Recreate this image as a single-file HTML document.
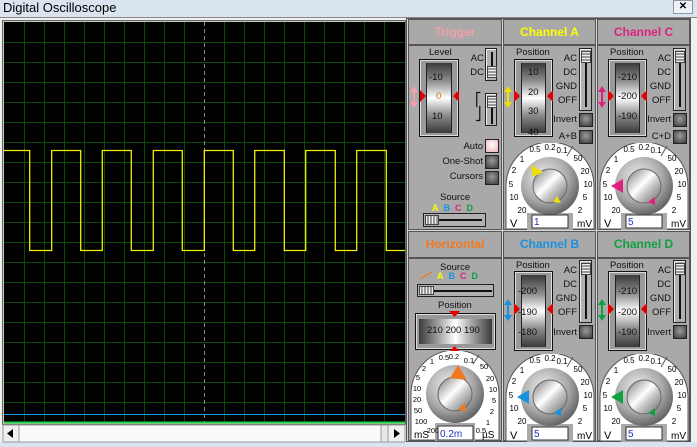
<!DOCTYPE html>
<html><head><meta charset="utf-8">
<style>
*{margin:0;padding:0;box-sizing:border-box}
body{width:697px;height:447px;overflow:hidden;background:#dae4ee;font-family:"Liberation Sans",sans-serif;position:relative}
.a{position:absolute}
.t{position:absolute;font-size:9.5px;color:#111;white-space:nowrap;line-height:1}
.hdr{position:absolute;background:#a9a9a9;border:1px solid #555;font-weight:bold;font-size:12px;text-align:center;line-height:24px}
.body{position:absolute;background:#a9a9a9;border:1px solid #555}
.btn{position:absolute;width:14px;height:14px;border:1px solid #222;background:radial-gradient(circle at 50% 40%,#9a9a9a,#3a3a3a)}
.drumbox{position:absolute;border:1px solid #111;background:#999;box-shadow:inset 0 0 0 1px #ddd}
.drum{position:absolute;left:6px;right:6px;top:3px;bottom:3px;background:linear-gradient(#3a3a3a,#8a8a8a 25%,#fff 50%,#8a8a8a 75%,#3a3a3a);border-left:1px solid #222;border-right:1px solid #222}
.vsw{position:absolute;border:1px solid #222;background:#b0b0b0;box-shadow:inset 1px 1px 0 #eee}
.vsw i{position:absolute;left:5px;width:2px;background:#111}
.vsw b{position:absolute;left:1px;width:10px;height:12px;background:repeating-linear-gradient(#eee 0 1px,#999 1px 3px);border:1px solid #444}
.r{text-align:right}
</style></head><body>
<div class="t" style="left:3px;top:1px;font-size:13px;color:#000">Digital Oscilloscope</div>
<div class="a" style="left:673px;top:0;width:20px;height:14px;border:1px solid #8a96a4;background:#eef2f6;font-size:10px;text-align:center;line-height:12px;font-weight:bold">✕</div>
<div class="a" style="left:0;top:17px;width:697px;height:425px;background:#f0f0f0;border-top:1px solid #888"></div>
<div class="a" style="left:2px;top:20px;width:404px;height:405px;background:#c8c8c8;border:1px solid #666"></div>
<svg class="a" style="left:0;top:0" width="410" height="447">
<rect x="4" y="22" width="401" height="401" fill="#000"/>
<g stroke="#0b4a0b" stroke-width="1">
<path d="M24.5 22V423M44.5 22V423M64.5 22V423M84.5 22V423M104.5 22V423M124.5 22V423M144.5 22V423M164.5 22V423M184.5 22V423M224.5 22V423M244.5 22V423M264.5 22V423M284.5 22V423M304.5 22V423M324.5 22V423M344.5 22V423M364.5 22V423M384.5 22V423"/>
<path d="M4 42.5H405M4 62.5H405M4 82.5H405M4 102.5H405M4 122.5H405M4 142.5H405M4 162.5H405M4 182.5H405M4 202.5H405M4 222.5H405M4 242.5H405M4 262.5H405M4 282.5H405M4 302.5H405M4 322.5H405M4 342.5H405M4 362.5H405M4 382.5H405M4 402.5H405"/>
</g>
<path d="M204.5 22V423" stroke="#888" stroke-dasharray="4 3"/>
<path d="M4 414.5H405" stroke="#1aa0e0" stroke-width="1"/>
<path d="M4 422.5H405" stroke="#20d040" stroke-width="2"/>
<path d="M4 150.5H29.7V250.5H51.7V150.5H80.7V250.5H102.3V150.5H131.3V250.5H153.3V150.5H182.3V250.5H204.3V150.5H233.3V250.5H254.7V150.5H284.3V250.5H305.7V150.5H335.3V250.5H356.7V150.5H386.3V250.5H405" fill="none" stroke="#f0f000" stroke-width="1.3"/>
<rect x="3" y="425" width="402" height="17" fill="#fafafa" stroke="#999"/>
<rect x="3" y="425" width="16" height="17" fill="#f0f0f0" stroke="#999"/>
<path d="M13 429L7 433.5L13 438Z" fill="#000"/>
<rect x="381" y="425" width="7" height="17" fill="#e8e8e8" stroke="#999"/>
<rect x="388" y="425" width="17" height="17" fill="#f0f0f0" stroke="#999"/>
<path d="M394 429L400 433.5L394 438Z" fill="#000"/>
</svg>
<div class="a" style="left:406px;top:18px;width:285px;height:424px;background:#d8d8d8;border:1px solid #555"></div>

<div class="hdr" style="left:408px;top:19px;width:94px;height:26px;color:#f2a0aa">Trigger</div>
<div class="hdr" style="left:503px;top:19px;width:93px;height:26px;color:#ffff00">Channel A</div>
<div class="hdr" style="left:597px;top:19px;width:93px;height:26px;color:#e0207f">Channel C</div>
<div class="hdr" style="left:408px;top:231px;width:94px;height:27px;color:#f07820">Horizontal</div>
<div class="hdr" style="left:503px;top:231px;width:93px;height:27px;color:#1a90e0">Channel B</div>
<div class="hdr" style="left:597px;top:231px;width:93px;height:27px;color:#10a040">Channel D</div>
<div class="body" style="left:408px;top:45px;width:94px;height:185px"></div>
<div class="body" style="left:503px;top:45px;width:93px;height:185px"></div>
<div class="body" style="left:597px;top:45px;width:93px;height:185px"></div>
<div class="body" style="left:408px;top:258px;width:94px;height:183px"></div>
<div class="body" style="left:503px;top:258px;width:93px;height:183px"></div>
<div class="body" style="left:597px;top:258px;width:93px;height:183px"></div>

<!-- Trigger -->
<div class="t" style="left:429px;top:48px">Level</div>
<div class="drumbox" style="left:419px;top:59px;width:40px;height:78px"><div class="drum"></div></div>
<div class="t" style="left:429px;top:73px">-10</div>
<div class="t" style="left:436px;top:92px;color:#e07000">0</div>
<div class="t" style="left:432px;top:112px">10</div>
<svg class="a" style="left:410px;top:84px" width="52" height="26"><path d="M4 2L0 8H3V18H0L4 24L8 18H5V8H8Z" fill="#f2a0aa"/><path d="M10 6L16 12L10 18Z M49 6L43 12L49 18Z" fill="#e00000"/></svg>
<div class="t r" style="left:460px;top:54px;width:24px">AC</div>
<div class="t r" style="left:460px;top:68px;width:24px">DC</div>
<div class="vsw" style="left:485px;top:48px;width:12px;height:33px"><i style="top:3px;height:14px"></i><b style="top:17px"></b></div>
<div class="t" style="left:475px;top:93px;font-size:13px">⎡</div>
<div class="t" style="left:475px;top:107px;font-size:13px">⎦</div>
<div class="vsw" style="left:485px;top:93px;width:12px;height:33px"><i style="top:14px;height:16px"></i><b style="top:2px"></b></div>
<div class="t r" style="left:430px;top:142px;width:53px">Auto</div>
<div class="btn" style="left:485px;top:139px;background:radial-gradient(circle at 50% 40%,#fff,#f0b0b8)"></div>
<div class="t r" style="left:430px;top:157px;width:53px">One-Shot</div>
<div class="btn" style="left:485px;top:155px"></div>
<div class="t r" style="left:430px;top:172px;width:53px">Cursors</div>
<div class="btn" style="left:485px;top:171px"></div>
<div class="t" style="left:440px;top:193px">Source</div>
<div class="t" style="left:432px;top:204px;font-size:9px;font-weight:bold"><span style="color:#ff0">A</span>&nbsp; <span style="color:#1a90e0">B</span>&nbsp; <span style="color:#e0207f">C</span>&nbsp; <span style="color:#10a040">D</span></div>
<div class="a" style="left:423px;top:213px;width:63px;height:14px;border:1px solid #222;background:#b0b0b0"><div class="a" style="left:8px;top:5px;width:50px;height:2px;background:#111"></div><div class="a" style="left:1px;top:1px;width:14px;height:10px;background:repeating-linear-gradient(90deg,#eee 0 1px,#999 1px 3px);border:1px solid #444"></div></div>

<!-- Horizontal -->
<div class="t" style="left:440px;top:263px">Source</div>
<svg class="a" style="left:420px;top:271px" width="14" height="9"><path d="M0 8L12 1" stroke="#f07820" stroke-width="1.3"/></svg>
<div class="t" style="left:437px;top:272px;font-size:9px;font-weight:bold"><span style="color:#ff0">A</span>&nbsp; <span style="color:#1a90e0">B</span>&nbsp; <span style="color:#e0207f">C</span>&nbsp; <span style="color:#10a040">D</span></div>
<div class="a" style="left:417px;top:284px;width:77px;height:13px;border:1px solid #222;background:#b0b0b0"><div class="a" style="left:8px;top:5px;width:66px;height:2px;background:#111"></div><div class="a" style="left:1px;top:1px;width:15px;height:9px;background:repeating-linear-gradient(90deg,#eee 0 1px,#999 1px 3px);border:1px solid #444"></div></div>
<div class="t" style="left:438px;top:301px">Position</div>
<div class="drumbox" style="left:415px;top:313px;width:81px;height:37px"><div class="a" style="left:3px;top:5px;right:3px;bottom:5px;background:linear-gradient(90deg,#3a3a3a,#9a9a9a 25%,#fff 50%,#9a9a9a 75%,#3a3a3a)"></div></div>
<div class="t" style="left:427px;top:326px">210 200 190</div>
<svg class="a" style="left:449px;top:311px" width="12" height="41"><path d="M0 0H11L5.5 6Z M0 41H11L5.5 35Z" fill="#e00000"/></svg>

<!-- Channel A -->
<div class="t" style="left:516px;top:48px">Position</div>
<div class="drumbox" style="left:514px;top:59px;width:39px;height:78px"><div class="drum"></div></div>
<div class="t" style="left:528px;top:68px">10</div>
<div class="t" style="left:528px;top:88px">20</div>
<div class="t" style="left:528px;top:107px">30</div>
<div class="t" style="left:528px;top:128px">40</div>
<svg class="a" style="left:504px;top:84px" width="52" height="26"><path d="M4 2L0 8H3V18H0L4 24L8 18H5V8H8Z" fill="#f0e000"/><path d="M10 6L16 12L10 18Z M49 6L43 12L49 18Z" fill="#e00000"/></svg>
<div class="t r" style="left:552px;top:54px;width:25px">AC</div>
<div class="t r" style="left:552px;top:68px;width:25px">DC</div>
<div class="t r" style="left:552px;top:82px;width:25px">GND</div>
<div class="t r" style="left:552px;top:96px;width:25px">OFF</div>
<div class="vsw" style="left:579px;top:48px;width:13px;height:63px"><i style="top:14px;height:44px;left:5px"></i><b style="top:2px"></b></div>
<div class="t r" style="left:546px;top:115px;width:31px">Invert</div>
<div class="btn" style="left:579px;top:113px"></div>
<div class="t r" style="left:546px;top:132px;width:31px">A+B</div>
<div class="btn" style="left:579px;top:130px"></div>

<!-- Channel C -->
<div class="t" style="left:610px;top:48px">Position</div>
<div class="drumbox" style="left:608px;top:59px;width:39px;height:78px"><div class="drum"></div></div>
<div class="t" style="left:618px;top:73px">-210</div>
<div class="t" style="left:618px;top:92px">-200</div>
<div class="t" style="left:618px;top:112px">-190</div>
<svg class="a" style="left:598px;top:84px" width="52" height="26"><path d="M4 2L0 8H3V18H0L4 24L8 18H5V8H8Z" fill="#e0207f"/><path d="M10 6L16 12L10 18Z M49 6L43 12L49 18Z" fill="#e00000"/></svg>
<div class="t r" style="left:646px;top:54px;width:25px">AC</div>
<div class="t r" style="left:646px;top:68px;width:25px">DC</div>
<div class="t r" style="left:646px;top:82px;width:25px">GND</div>
<div class="t r" style="left:646px;top:96px;width:25px">OFF</div>
<div class="vsw" style="left:673px;top:48px;width:13px;height:63px"><i style="top:14px;height:44px;left:5px"></i><b style="top:2px"></b></div>
<div class="t r" style="left:640px;top:115px;width:31px">Invert</div>
<div class="btn" style="left:673px;top:113px"></div>
<div class="t r" style="left:640px;top:132px;width:31px">C+D</div>
<div class="btn" style="left:673px;top:130px"></div>

<!-- Channel B -->
<div class="t" style="left:516px;top:261px">Position</div>
<div class="drumbox" style="left:514px;top:271px;width:39px;height:80px"><div class="drum"></div></div>
<div class="t" style="left:518px;top:287px">-200</div>
<div class="t" style="left:518px;top:308px">-190</div>
<div class="t" style="left:518px;top:328px">-180</div>
<svg class="a" style="left:504px;top:297px" width="52" height="26"><path d="M4 2L0 8H3V18H0L4 24L8 18H5V8H8Z" fill="#1a90e0"/><path d="M10 6L16 12L10 18Z M49 6L43 12L49 18Z" fill="#e00000"/></svg>
<div class="t r" style="left:552px;top:266px;width:25px">AC</div>
<div class="t r" style="left:552px;top:280px;width:25px">DC</div>
<div class="t r" style="left:552px;top:294px;width:25px">GND</div>
<div class="t r" style="left:552px;top:308px;width:25px">OFF</div>
<div class="vsw" style="left:579px;top:260px;width:13px;height:63px"><i style="top:14px;height:44px;left:5px"></i><b style="top:2px"></b></div>
<div class="t r" style="left:546px;top:328px;width:31px">Invert</div>
<div class="btn" style="left:579px;top:325px"></div>

<!-- Channel D -->
<div class="t" style="left:610px;top:261px">Position</div>
<div class="drumbox" style="left:608px;top:271px;width:39px;height:80px"><div class="drum"></div></div>
<div class="t" style="left:618px;top:287px">-210</div>
<div class="t" style="left:618px;top:308px">-200</div>
<div class="t" style="left:618px;top:328px">-190</div>
<svg class="a" style="left:598px;top:297px" width="52" height="26"><path d="M4 2L0 8H3V18H0L4 24L8 18H5V8H8Z" fill="#10a040"/><path d="M10 6L16 12L10 18Z M49 6L43 12L49 18Z" fill="#e00000"/></svg>
<div class="t r" style="left:646px;top:266px;width:25px">AC</div>
<div class="t r" style="left:646px;top:280px;width:25px">DC</div>
<div class="t r" style="left:646px;top:294px;width:25px">GND</div>
<div class="t r" style="left:646px;top:308px;width:25px">OFF</div>
<div class="vsw" style="left:673px;top:260px;width:13px;height:63px"><i style="top:14px;height:44px;left:5px"></i><b style="top:2px"></b></div>
<div class="t r" style="left:640px;top:328px;width:31px">Invert</div>
<div class="btn" style="left:673px;top:325px"></div>

<svg width="0" height="0" style="position:absolute"><defs>
<radialGradient id="kg" cx="40%" cy="35%" r="70%"><stop offset="0" stop-color="#f0f0f0"/><stop offset=".6" stop-color="#a8a8a8"/><stop offset="1" stop-color="#5a5a5a"/></radialGradient>
<linearGradient id="ig" x1="0" y1="0" x2="1" y2="1"><stop offset="0" stop-color="#777"/><stop offset=".45" stop-color="#fff"/><stop offset=".6" stop-color="#ccc"/><stop offset="1" stop-color="#666"/></linearGradient>
</defs></svg>

<svg class="a" style="left:505px;top:143px;font-family:'Liberation Sans',sans-serif;font-size:8px" width="90" height="87">
<path d="M1,86V43A44,44 0 0 1 89,43V86Z" fill="#fff" stroke="#555"/>
<rect x="22" y="70" width="46" height="17" fill="#a9a9a9"/>
<path d="M68 3L62 13" stroke="#555"/>
<g text-anchor="middle"><text x="30" y="9">0.5</text><text x="45" y="7">0.2</text><text x="57" y="10">0.1</text><text x="17" y="19">1</text><text x="9" y="30">2</text><text x="6" y="44">5</text><text x="9" y="57">10</text><text x="17" y="70">20</text><text x="73" y="18">50</text><text x="80" y="31">20</text><text x="83" y="44">10</text><text x="80" y="57">5</text><text x="75" y="70">2</text></g>
<circle cx="45" cy="43" r="29" fill="url(#kg)"/><circle cx="45" cy="43" r="17" fill="url(#ig)" stroke="#666"/>
<path d="M26 22L38 29L28 34Z" fill="#f0e000"/><path d="M52 53L56 60L48 59Z" fill="#f0e000"/>
<text x="5" y="84" font-size="11">V</text><rect x="27" y="72" width="36" height="13" fill="#fff" stroke="#333"/><text x="29" y="82" font-size="10" fill="#2030c0">1</text><text x="72" y="84" font-size="10">mV</text>
</svg>
<svg class="a" style="left:599px;top:143px;font-family:'Liberation Sans',sans-serif;font-size:8px" width="90" height="87">
<path d="M1,86V43A44,44 0 0 1 89,43V86Z" fill="#fff" stroke="#555"/>
<rect x="22" y="70" width="46" height="17" fill="#a9a9a9"/>
<path d="M68 3L62 13" stroke="#555"/>
<g text-anchor="middle"><text x="30" y="9">0.5</text><text x="45" y="7">0.2</text><text x="57" y="10">0.1</text><text x="17" y="19">1</text><text x="9" y="30">2</text><text x="6" y="44">5</text><text x="9" y="57">10</text><text x="17" y="70">20</text><text x="73" y="18">50</text><text x="80" y="31">20</text><text x="83" y="44">10</text><text x="80" y="57">5</text><text x="75" y="70">2</text></g>
<circle cx="45" cy="43" r="29" fill="url(#kg)"/><circle cx="45" cy="43" r="17" fill="url(#ig)" stroke="#666"/>
<path d="M12 43L24 36L24 50Z" fill="#e0207f"/><path d="M56 54L56 62L49 59Z" fill="#e0207f"/>
<text x="5" y="84" font-size="11">V</text><rect x="27" y="72" width="36" height="13" fill="#fff" stroke="#333"/><text x="29" y="82" font-size="10" fill="#2030c0">5</text><text x="72" y="84" font-size="10">mV</text>
</svg>
<svg class="a" style="left:505px;top:354px;font-family:'Liberation Sans',sans-serif;font-size:8px" width="90" height="88">
<path d="M1,87V43A44,44 0 0 1 89,43V87Z" fill="#fff" stroke="#555"/>
<rect x="22" y="70" width="46" height="18" fill="#a9a9a9"/>
<path d="M68 3L62 13" stroke="#555"/>
<g text-anchor="middle"><text x="30" y="9">0.5</text><text x="45" y="7">0.2</text><text x="57" y="10">0.1</text><text x="17" y="19">1</text><text x="9" y="30">2</text><text x="6" y="44">5</text><text x="9" y="57">10</text><text x="17" y="70">20</text><text x="73" y="18">50</text><text x="80" y="31">20</text><text x="83" y="44">10</text><text x="80" y="57">5</text><text x="75" y="70">2</text></g>
<circle cx="45" cy="43" r="29" fill="url(#kg)"/><circle cx="45" cy="43" r="17" fill="url(#ig)" stroke="#666"/>
<path d="M12 43L24 36L24 50Z" fill="#1a90e0"/><path d="M56 54L56 62L49 59Z" fill="#1a90e0"/>
<text x="5" y="85" font-size="11">V</text><rect x="27" y="73" width="36" height="13" fill="#fff" stroke="#333"/><text x="29" y="83" font-size="10" fill="#2030c0">5</text><text x="72" y="85" font-size="10">mV</text>
</svg>
<svg class="a" style="left:599px;top:354px;font-family:'Liberation Sans',sans-serif;font-size:8px" width="90" height="88">
<path d="M1,87V43A44,44 0 0 1 89,43V87Z" fill="#fff" stroke="#555"/>
<rect x="22" y="70" width="46" height="18" fill="#a9a9a9"/>
<path d="M68 3L62 13" stroke="#555"/>
<g text-anchor="middle"><text x="30" y="9">0.5</text><text x="45" y="7">0.2</text><text x="57" y="10">0.1</text><text x="17" y="19">1</text><text x="9" y="30">2</text><text x="6" y="44">5</text><text x="9" y="57">10</text><text x="17" y="70">20</text><text x="73" y="18">50</text><text x="80" y="31">20</text><text x="83" y="44">10</text><text x="80" y="57">5</text><text x="75" y="70">2</text></g>
<circle cx="45" cy="43" r="29" fill="url(#kg)"/><circle cx="45" cy="43" r="17" fill="url(#ig)" stroke="#666"/>
<path d="M12 43L24 36L24 50Z" fill="#10a040"/><path d="M56 54L56 62L49 59Z" fill="#10a040"/>
<text x="5" y="85" font-size="11">V</text><rect x="27" y="73" width="36" height="13" fill="#fff" stroke="#333"/><text x="29" y="83" font-size="10" fill="#2030c0">5</text><text x="72" y="85" font-size="10">mV</text>
</svg>
<svg class="a" style="left:410px;top:351px;font-family:'Liberation Sans',sans-serif;font-size:7.5px" width="90" height="90">
<path d="M1,89V43A44,44 0 0 1 89,43V89Z" fill="#fff" stroke="#555"/>
<rect x="25" y="72" width="40" height="18" fill="#a9a9a9"/>
<path d="M69 4L63 13" stroke="#555"/>
<g text-anchor="middle"><text x="34" y="9">0.5</text><text x="44" y="8">0.2</text><text x="59" y="12">0.1</text><text x="22" y="13">1</text><text x="14" y="20">2</text><text x="8" y="29">5</text><text x="7" y="40">10</text><text x="7" y="51">20</text><text x="8" y="62">50</text><text x="11" y="73">100</text><text x="23" y="82">200</text><text x="74" y="18">50</text><text x="80" y="30">20</text><text x="83" y="41">10</text><text x="84" y="52">5</text><text x="82" y="63">2</text><text x="78" y="74">1</text><text x="71" y="82">0.5</text></g>
<circle cx="45" cy="43" r="29" fill="url(#kg)"/><circle cx="45" cy="43" r="17" fill="url(#ig)" stroke="#666"/>
<path d="M48 14L57 29L40 27Z" fill="#f07820"/><path d="M55 52L56 61L48 58Z" fill="#f07820"/>
<text x="4" y="87" font-size="10">mS</text><rect x="28" y="75" width="35" height="14" fill="#fff" stroke="#333"/><text x="30" y="86" font-size="10" fill="#2030c0">0.2m</text><text x="72" y="87" font-size="10">µS</text>
</svg>
</body></html>
